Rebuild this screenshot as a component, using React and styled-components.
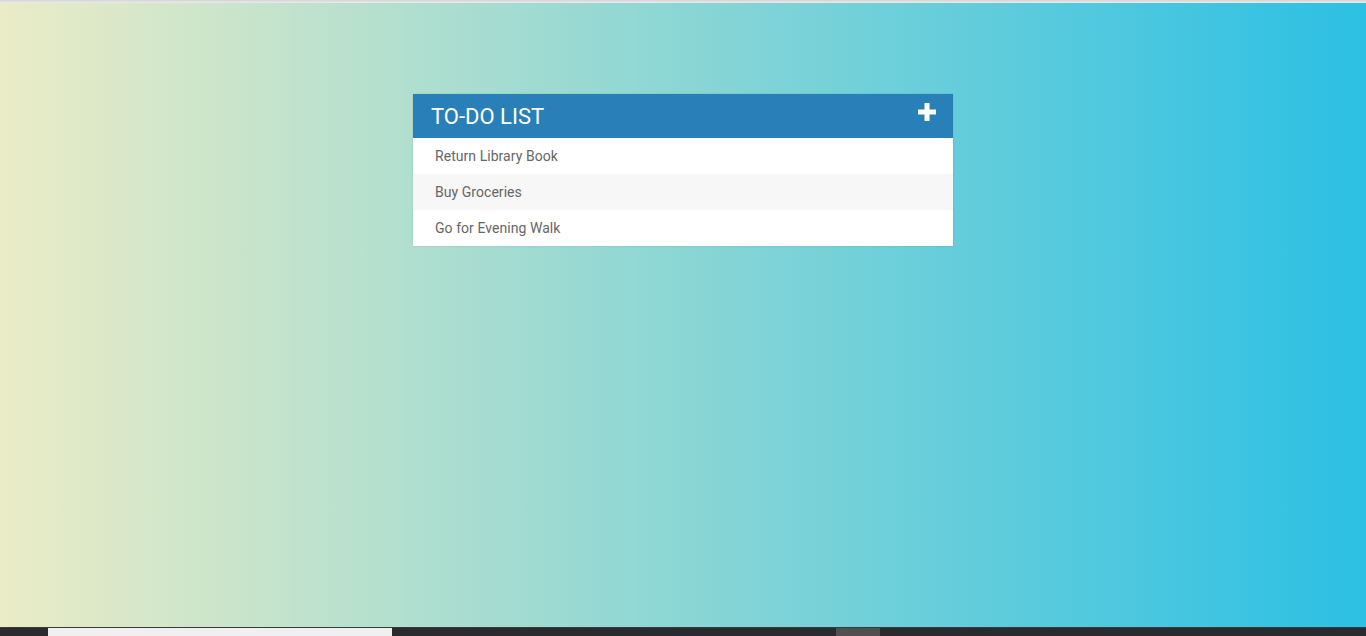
import React from 'react'
import styled, { createGlobalStyle } from 'styled-components'

const GlobalStyle = createGlobalStyle`
html, body {
  margin: 0;
  padding: 0;
  height: 100%;
  overflow: hidden;
}
body {
  font-family: Roboto, "Liberation Sans", sans-serif;
}
`

const Page = styled.div`
display: flex;
flex-direction: column;
height: 636px;
`

const TopLine = styled.div`
height: 3px;
background: linear-gradient(180deg, #d4d4d4, #ececec);
`

const Main = styled.main`
flex: 1;
background: linear-gradient(90deg, #eaecc6, #2bc0e4);
padding-top: 91px;
`

const Card = styled.div`
width: 540px;
margin: 0 auto;
background: #fff;
box-shadow: 0 0 2px rgba(0, 0, 0, 0.12);
`

const Header = styled.div`
height: 44px;
display: flex;
align-items: center;
justify-content: space-between;
padding: 0 17px 0 18px;
background: #2980b9;
color: #fff;
`

const Title = styled.h1`
margin: 0;
font-size: 22px;
font-weight: 400;
text-transform: uppercase;
`

const AddButton = styled.button`
border: 0;
padding: 0;
background: none;
display: flex;
margin-top: -8px;
cursor: pointer;
`

const List = styled.ul`
margin: 0;
padding: 0;
list-style: none;
`

const Item = styled.li`
height: 36px;
line-height: 36px;
padding-left: 22px;
font-size: 14px;
letter-spacing: 0.05px;
color: #666;
background: ${props => (props.alt ? '#f7f7f7' : '#fff')};
`

const Taskbar = styled.div`
height: 8px;
display: flex;
background: #2b2a2e;
border-top: 1px solid #3a3a3a;
`

const TaskSlot = styled.div`
width: ${props => props.w}px;
margin-left: ${props => props.ml || 0}px;
background: ${props => props.bg};
`

const todos = ['Return Library Book', 'Buy Groceries', 'Go for Evening Walk']

function PlusIcon() {
  return (
    <svg width="18" height="18" viewBox="0 0 18 18">
      <path d="M6.5 0h5v6.5H18v5h-6.5V18h-5v-6.5H0v-5h6.5z" fill="#fff" />
    </svg>
  )
}

export default function App() {
  return (
    <Page>
      <GlobalStyle />
      <TopLine />
      <Main>
        <Card>
          <Header>
            <Title>To-Do List</Title>
            <AddButton aria-label="add">
              <PlusIcon />
            </AddButton>
          </Header>
          <List>
            {todos.map((t, i) => (
              <Item key={t} alt={i % 2 === 1}>{t}</Item>
            ))}
          </List>
        </Card>
      </Main>
      <Taskbar>
        <TaskSlot w={344} ml={48} bg="#f0f0f0" />
        <TaskSlot w={44} ml={444} bg="#505050" />
      </Taskbar>
    </Page>
  )
}
